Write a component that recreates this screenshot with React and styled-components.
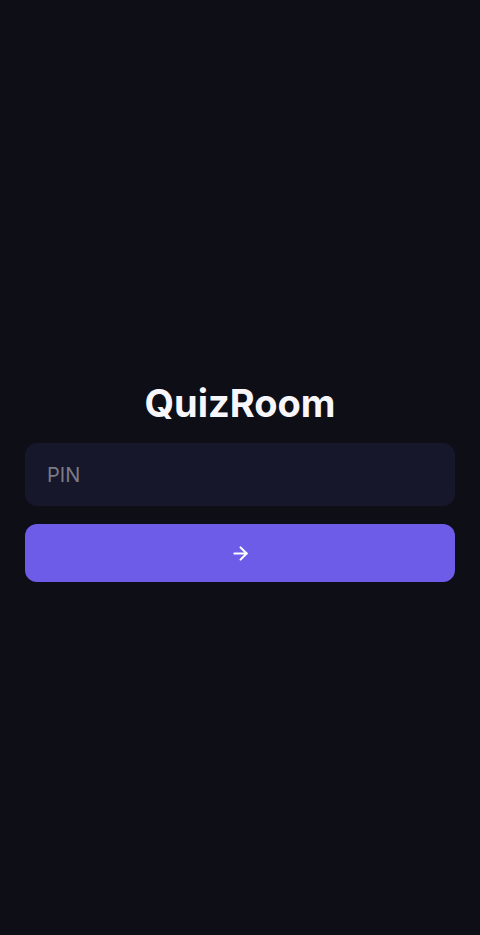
import React, { useState } from "react";
import styled, { createGlobalStyle } from "styled-components";

const GlobalStyle = createGlobalStyle`
  * {
    box-sizing: border-box;
  }
  html, body {
    margin: 0;
    padding: 0;
    background: #0e0e17;
  }
  body {
    font-family: Inter, "Noto Sans", sans-serif;
    color: #f5f5fa;
  }
`;

// layout

const Page = styled.main`
  min-height: 100vh;
  display: flex;
  flex-direction: column;
  justify-content: center;
  padding: 26px 25px 0;
`;

const Form = styled.form`
  display: flex;
  flex-direction: column;
  width: 100%;
`;

const Title = styled.h1`
  margin: 0 0 16px;
  text-align: center;
  font-size: 38px;
  line-height: 48px;
  font-weight: 700;
  color: #f7f7fb;
`;

const PinInput = styled.input`
  width: 100%;
  height: 63px;
  padding: 0 22px;
  border: none;
  outline: none;
  border-radius: 12px;
  background: #16172b;
  color: #f5f5fa;
  font-family: inherit;
  font-size: 20px;
  &::placeholder {
    color: #7b7b86;
  }
`;

const SubmitButton = styled.button`
  margin-top: 18px;
  height: 58px;
  width: 100%;
  border: none;
  border-radius: 12px;
  background: #6c5ce7;
  color: #fff;
  display: flex;
  align-items: center;
  justify-content: center;
  cursor: pointer;
`;

const Arrow = () => (
  <svg width="21" height="21" viewBox="0 0 24 24" fill="none" stroke="currentColor" strokeWidth="2.4" strokeLinecap="round" strokeLinejoin="round">
    <path d="M5 12h14" />
    <path d="M12 5l7 7-7 7" />
  </svg>
);

export default function App() {
  const [pin, setPin] = useState("");

  return (
    <>
      <GlobalStyle />
      <Page>
        <Form onSubmit={e => e.preventDefault()}>
          <Title>QuizRoom</Title>
          <PinInput placeholder="PIN" value={pin} onChange={e => setPin(e.target.value)} inputMode="numeric" />
          <SubmitButton type="submit" aria-label="Join">
            <Arrow />
          </SubmitButton>
        </Form>
      </Page>
    </>
  );
}
